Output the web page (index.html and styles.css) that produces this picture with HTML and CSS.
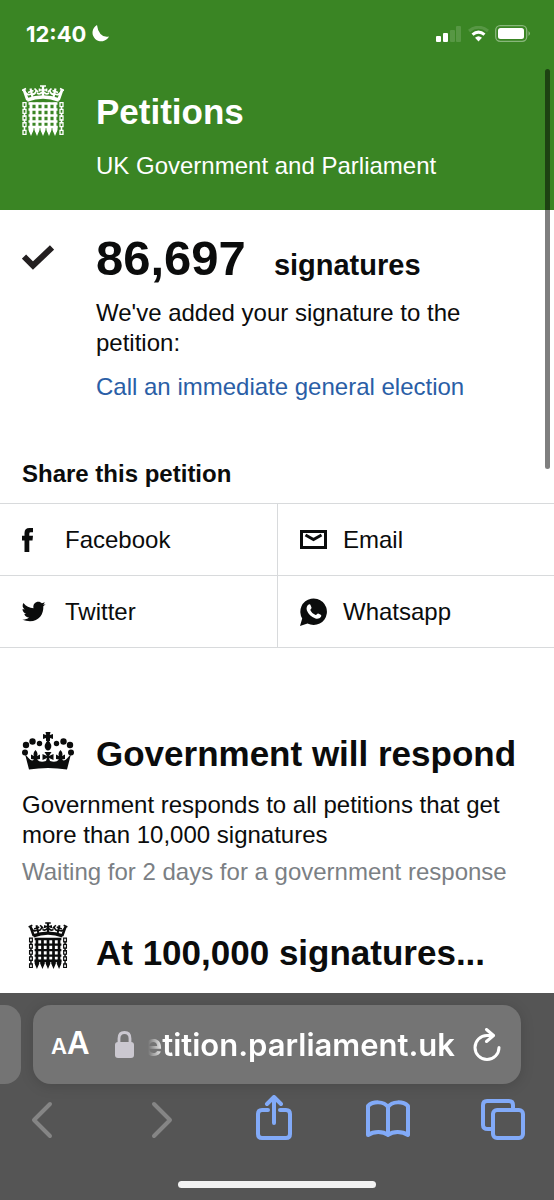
FILE: index.html
```html
<!DOCTYPE html>
<html lang="en">
<head>
    <meta charset="UTF-8">
    <meta name="viewport" content="width=device-width, initial-scale=1.0">
    <title>Petitions - UK Government and Parliament</title>
    <link rel="stylesheet" href="styles.css">
</head>
<body>
    <!-- Shared symbols -->
    <svg class="symbols" aria-hidden="true">
        <symbol id="portcullis" viewBox="0 0 42 51">
            <!-- crown -->
            <g fill="none" stroke="currentColor" stroke-width="1.700">
                <path stroke-width="3.600" d="M5 15 Q21 9 37 15"/>
                <path stroke-width="2.800" d="M5.500 15 L2 5 M36.500 15 L40 5"/>
                <path d="M0 5.500 L4 3.500 M42 5.500 L38 3.500"/>
                <path d="M3 7 Q5 11 9 9 M39 7 Q37 11 33 9"/>
                <path stroke-width="2.200" d="M10.500 12 L8.500 3.500 M31.500 12 L33.500 3.500"/>
                <path d="M6 7.500 L11.500 5.500 M36 7.500 L30.500 5.500"/>
                <path d="M10 9 Q13 10 14.500 5 M32 9 Q29 10 27.500 5"/>
                <path d="M12.500 3.500 L16 7 M29.500 3.500 L26 7 M15 8 Q18 10 20 7 M27 8 Q24 10 22 7"/>
                <path stroke-width="2.400" d="M21 12 V1"/>
                <path d="M18 1 H24 M17 5 H25 M17.500 3.500 V6.500 M24.500 3.500 V6.500"/>
            </g>
            <!-- gate -->
            <g fill="none" stroke="currentColor">
                <path stroke-width="2.900" d="M9 17.500 V47 M15 17.500 V47 M21 17.500 V47 M27 17.500 V47 M33 17.500 V47"/>
                <path stroke-width="2.600" d="M6.500 18.500 H35.500 M6.500 24.500 H35.500 M6.500 30.500 H35.500 M6.500 36.500 H35.500 M6.500 42 H35.500"/>
            </g>
            <path fill="currentColor" d="M6.500 41 h5 v4 l-2.500 6 l-2.500 -6z M12.500 41 h5 v4 l-2.500 6 l-2.500 -6z M18.500 41 h5 v4 l-2.500 6 l-2.500 -6z M24.500 41 h5 v4 l-2.500 6 l-2.500 -6z M30.500 41 h5 v4 l-2.500 6 l-2.500 -6z"/>
            <!-- chains -->
            <g fill="none" stroke="currentColor" stroke-width="1.300">
                <path d="M1 17.600 h3 v4 h-3z M1 24.300 h3 v4 h-3z M1 31 h3 v4 h-3z M1 37.700 h3 v4 h-3z M1 45.400 h3 v4 h-3z"/>
                <path d="M38 17.600 h3 v4 h-3z M38 24.300 h3 v4 h-3z M38 31 h3 v4 h-3z M38 37.700 h3 v4 h-3z M38 45.400 h3 v4 h-3z"/>
                <path stroke-width="1.600" d="M2.500 21 v4 M2.500 28 v4 M2.500 34.500 v4 M2.500 41 v5 M39.500 21 v4 M39.500 28 v4 M39.500 34.500 v4 M39.500 41 v5"/>
            </g>
        </symbol>
    </svg>

    <div class="status-bar">
        <div class="clock">
            <span>12:40</span>
            <svg width="17" height="17" viewBox="0 0 17 17"><path fill="#fff" d="M5 0 A8.700 8.700 0 1 0 17 11.500 Q11.500 12.500 8.500 9 Q5.500 5.500 5 0Z"/></svg>
        </div>
        <div class="signal">
            <svg width="26" height="16" viewBox="0 0 26 16" fill="#fff">
                <rect x="0" y="10" width="5" height="6" rx="1"/>
                <rect x="7" y="7" width="5" height="9" rx="1"/>
                <rect x="14" y="4" width="5" height="12" rx="1" opacity=".15"/>
                <rect x="20" y="0" width="5" height="16" rx="1" opacity=".15"/>
            </svg>
            <svg width="21" height="16" viewBox="0 0 21 16" fill="none" stroke="#fff">
                <path d="M1 5 Q10.500 -2.500 20 5" stroke-width="3" opacity=".15"/>
                <path d="M4.500 8.700 Q10.500 3.500 16.500 8.700" stroke-width="3"/>
                <path d="M7 11.800 Q10.500 8.800 14 11.800 L10.500 15.500Z" fill="#fff" stroke="none"/>
            </svg>
            <svg width="36" height="17" viewBox="0 0 36 17">
                <rect x=".7" y=".7" width="31" height="15.600" rx="4.500" fill="none" stroke="#fff" stroke-width="1.300" opacity=".4"/>
                <rect x="3" y="3" width="26" height="11" rx="2.500" fill="#fff"/>
                <path d="M33.500 6 q3 2.500 0 5z" fill="#fff" opacity=".4"/>
            </svg>
        </div>
    </div>

    <header class="site-header">
        <svg class="logo" width="42" height="51"><use href="#portcullis"/></svg>
        <div>
            <a class="site-title" href="#">Petitions</a>
            <p>UK Government and Parliament</p>
        </div>
    </header>

    <main>
        <section class="signed">
            <svg width="32" height="25" viewBox="0 0 32 25"><path fill="none" stroke="#231f20" stroke-width="6" d="M2 11.500 L11 20.500 L30 2.500"/></svg>
            <div>
                <h1><span class="count">86,697</span> <span>signatures</span></h1>
                <p>We've added your signature to the petition:</p>
                <p><a href="#">Call an immediate general election</a></p>
            </div>
        </section>

        <section class="share">
            <h2>Share this petition</h2>
            <ul>
                <li><a href="#">
                    <svg width="28" height="28" viewBox="0 0 28 28"><path fill="#0b0c0c" d="M2.500 26 V14.500 H0 V9.800 H2.500 V7 Q2.500 2 7.500 2 H11 V6.300 H8.700 Q7.300 6.300 7.300 7.700 V9.800 H11 L10.500 14.500 H7.300 V26Z"/></svg>
                    Facebook
                </a></li>
                <li><a href="#">
                    <svg width="28" height="28" viewBox="0 0 28 28"><path fill="#0b0c0c" d="M23.600 6.300 L21.300 8.200 C22 18 14 27 0 21.600 C3 21.800 5.300 20.800 7 19.400 C4.700 19.300 3 17.900 2.300 15.900 H4.300 C2 15 .5 13.300 .5 10.900 L2.700 11.500 C.5 9.700 0 7.200 1.400 5 C4 8.200 7.500 10 11.500 10.200 C10.700 6 13.500 3.800 16.300 3.800 C17.800 3.800 19 4.400 19.900 5.300 L22.900 4.200 L21.300 6.700Z"/></svg>
                    Twitter
                </a></li>
                <li><a href="#">
                    <svg width="28" height="28" viewBox="0 0 28 28"><path fill="none" stroke="#0b0c0c" stroke-width="3" d="M1.500 5.500 H25.500 V21.500 H1.500Z"/><path fill="none" stroke="#0b0c0c" stroke-width="3" d="M5.500 9 L13.500 13.500 L21.500 9"/></svg>
                    Email
                </a></li>
                <li><a href="#">
                    <svg width="28" height="28" viewBox="0 0 28 28"><path fill="#0b0c0c" d="M0 28 L2.200 20.500 A13.300 13.300 0 1 1 7.500 25.500Z"/><path fill="#fff" d="M8.700 6.500 C9.800 6 10.300 6.500 10.700 7.500 L11.500 9.500 C11.800 10.500 10.200 11.500 10.300 12 C11.300 14.300 13 16 15.700 17 C16.500 17.200 17.300 15.200 18.200 15.500 L20.700 16.800 C21.600 17.300 21.300 18 21 18.800 C20 20.500 17.500 21.200 15.500 20.500 C11 19 8.300 16 6.900 12.500 C6.100 10 6.800 7.400 8.700 6.500Z"/></svg>
                    Whatsapp
                </a></li>
            </ul>
        </section>

        <section class="threshold">
            <h2>
                <svg width="52" height="38" viewBox="0 0 52 38" fill="#0b0c0c">
                    <path d="M23.500 0 H28.500 L27.800 3 L31 2 V7 L28 6 V9 H24 V6 L21 7 V2 L24.200 3Z"/>
                    <path d="M26 8 Q31 13 28.500 17 Q26 20 23.500 17 Q21 13 26 8Z"/>
                    <circle cx="17.500" cy="11.500" r="2.700"/><circle cx="10.500" cy="9.500" r="3.200"/><circle cx="4" cy="13" r="3.200"/><circle cx="3" cy="20.500" r="3"/>
                    <circle cx="34.500" cy="11.500" r="2.700"/><circle cx="41.500" cy="9.500" r="3.200"/><circle cx="48" cy="13" r="3.200"/><circle cx="49" cy="20.500" r="3"/>
                    <path d="M3 22 L6.500 26 Q9.500 30 12 27.500 L9 27 V22.500 L12 24 Q10.500 21 13.500 18 Q16.500 21 15 24 L18 22.500 V27 L15 27.500 Q18 31 24 29 L25 26 L20.500 28 V22 L25 24 L22.500 20 H29.500 L27 24 L31.500 22 V28 L27 26 L28 29 Q34 31 37 27.500 L34 27 V22.500 L37 24 Q35.500 21 38.500 18 Q41.500 21 40 24 L43 22.500 V27 L40 27.500 Q42.500 30 45.500 26 L49 22 L45 37.500 Q26 34.500 7 37.500Z"/>
                </svg>
                Government will respond
            </h2>
            <p>Government responds to all petitions that get more than 10,000 signatures</p>
            <p class="waiting">Waiting for 2 days for a government response</p>
        </section>

        <section class="threshold debate">
            <h2>
                <svg width="52" height="47"><use href="#portcullis"/></svg>
                At 100,000 signatures...
            </h2>
        </section>
    </main>

    <div class="scrollbar"></div>

    <footer class="browser-bar">
        <div class="tab-strip">
            <div class="previous-tab"></div>
            <div class="address">
                <button class="text-size" aria-label="Page settings"><span>A</span>A</button>
                <svg width="19" height="27" viewBox="0 0 19 27"><rect y="11" width="19" height="16" rx="3" fill="#cbc8d0"/><path d="M4 12 V7.500 Q4 1.500 9.500 1.500 T15 7.500 V12" fill="none" stroke="#cbc8d0" stroke-width="2.800"/></svg>
                <button class="url">etition.parliament.uk</button>
                <button aria-label="Reload">
                    <svg width="28" height="34" viewBox="0 0 28 34" fill="none" stroke="#fff" stroke-width="3" stroke-linecap="round" stroke-linejoin="round"><path d="M20 7.500 H14 A12 12 0 1 0 26 19.500"/><path d="M13.500 1.500 L20.500 7.500 L13.500 13.500"/></svg>
                </button>
            </div>
        </div>
        <nav class="toolbar">
            <button aria-label="Back" disabled><svg width="44" height="48" viewBox="0 0 44 48"><path d="M30 9 L14 25 L30 41"/></svg></button>
            <button aria-label="Forward" disabled><svg width="44" height="48" viewBox="0 0 44 48"><path d="M19 9 L35 25 L19 41"/></svg></button>
            <button aria-label="Share"><svg width="44" height="48" viewBox="0 0 44 48"><path d="M17 15 H11 Q7 15 7 19 V39 Q7 43 11 43 H35 Q39 43 39 39 V19 Q39 15 35 15 H29 M23 28 V3 M16 9 L23 2 L30 9"/></svg></button>
            <button aria-label="Bookmarks"><svg width="44" height="48" viewBox="0 0 44 48"><path d="M22 12 C18 6 7 6 2 11 V40 C8 36 17 36 22 40 C27 36 36 36 42 40 V11 C37 6 26 6 22 12 V40"/></svg></button>
            <button aria-label="Tabs"><svg width="44" height="48" viewBox="0 0 44 48"><rect x="12" y="15" width="30" height="28" rx="4"/><path d="M12 34 H7 Q2 34 2 30 V10 Q2 6 6 6 H28 Q32 6 32 10 V15"/></svg></button>
        </nav>
        <div class="home-indicator"></div>
    </footer>
</body>
</html>
```

FILE: styles.css
```css
* {
    box-sizing: border-box;
}

body {
    position: relative;
    display: flex;
    flex-direction: column;
    height: 100vh;
    margin: 0;
    overflow: hidden;
    background-color: #fff;
    color: #0b0c0c;
    font-family: "Helvetica Neue", "Liberation Sans", Arial, sans-serif;
    font-size: 24px;
    line-height: 30px;
}

h1, h2, p, ul {
    margin: 0;
    padding: 0;
}

a {
    color: #2a5ea6;
    text-decoration: none;
}

svg {
    display: block;
    flex: none;
}

button {
    padding: 0;
    border: none;
    background: none;
    color: #fff;
    font: inherit;
    cursor: pointer;
}

.symbols {
    position: absolute;
    width: 0;
    height: 0;
}

/* Status bar */
.status-bar {
    display: flex;
    justify-content: space-between;
    align-items: center;
    flex: none;
    height: 67px;
    padding: 0 23px 0 26px;
    background-color: #3a8524;
    color: #fff;
}

.clock, .signal {
    display: flex;
    align-items: center;
    gap: 6px;
}

.clock {
    font-family: Inter, sans-serif;
    font-size: 22px;
    font-weight: 700;
}

/* Header */
.site-header {
    display: flex;
    flex: none;
    gap: 32px;
    height: 143px;
    padding: 18px 22px 0;
    background-color: #3a8524;
    color: #fff;
}

.site-title {
    display: block;
    margin: 6px 0 18px;
    color: #fff;
    font-size: 35px;
    font-weight: 700;
    line-height: 42px;
}

/* Content */
main {
    flex: 1;
    min-height: 0;
    overflow: hidden;
}

.signed {
    display: flex;
    gap: 42px;
    padding: 23px 22px 0;
}

.signed > svg {
    margin-top: 12px;
}

.signed h1 {
    display: flex;
    align-items: baseline;
    gap: 28px;
    margin-bottom: 8px;
    font-size: 29px;
    line-height: 50px;
}

.signed .count {
    font-size: 49px;
}

.signed p {
    margin-bottom: 14px;
}

.share {
    margin-top: 43px;
}

.share h2 {
    padding: 0 22px 14px;
    font-size: 24px;
}

.share ul {
    display: grid;
    grid-template-columns: 1fr 1fr;
    grid-template-rows: 1fr 1fr;
    grid-auto-flow: column;
    border-top: 1px solid #d8dadc;
    list-style: none;
}

.share li {
    border-bottom: 1px solid #d8dadc;
}

.share li:nth-child(n+3) {
    border-left: 1px solid #d8dadc;
}

.share li a {
    display: flex;
    align-items: center;
    gap: 15px;
    height: 71px;
    padding: 0 22px;
    color: #0b0c0c;
}

.threshold {
    padding: 84px 22px 0;
}

.threshold h2 {
    display: flex;
    align-items: flex-start;
    gap: 22px;
    margin-bottom: 14px;
    font-size: 35px;
    line-height: 44px;
    white-space: nowrap;
}

.threshold .waiting {
    margin-top: 7px;
    color: #7b8084;
}

.debate {
    padding-top: 35px;
}

.debate h2 {
    line-height: 62px;
}

.scrollbar {
    position: absolute;
    top: 69px;
    right: 4px;
    width: 5px;
    height: 400px;
    border-radius: 3px;
    background-color: rgba(0, 0, 0, 0.5);
}

/* Browser controls */
.browser-bar {
    flex: none;
    padding: 12px 0;
    background-color: #555;
}

.tab-strip {
    display: flex;
    gap: 12px;
    padding-right: 33px;
}

.previous-tab {
    width: 21px;
    border-radius: 0 16px 16px 0;
    background-color: #747474;
}

.address {
    display: flex;
    flex: 1;
    align-items: center;
    min-width: 0;
    height: 79px;
    padding: 0 20px 0 18px;
    border-radius: 18px;
    background-color: #747474;
    box-shadow: 0 2px 14px rgba(0, 0, 0, 0.15);
    font-family: Inter, sans-serif;
    font-size: 31px;
    font-weight: 600;
}

.text-size {
    margin-right: 25px;
}

.text-size span {
    font-size: 22px;
}

.url {
    flex: 1;
    min-width: 0;
    margin-right: 18px;
    line-height: 40px;
    text-align: right;
    -webkit-mask-image: linear-gradient(to right, transparent 14px, #000 30px);
    mask-image: linear-gradient(to right, transparent 14px, #000 30px);
}

.toolbar {
    display: flex;
    justify-content: space-between;
    padding: 11px 29px 0 20px;
}

.toolbar svg {
    fill: none;
    stroke: #82aaf8;
    stroke-width: 4;
    stroke-linecap: round;
    stroke-linejoin: round;
}

.toolbar button:disabled svg {
    stroke: #858585;
}

.home-indicator {
    width: 198px;
    height: 7px;
    margin: 38px auto 0;
    border-radius: 4px;
    background-color: #f2f2f2;
}
```
